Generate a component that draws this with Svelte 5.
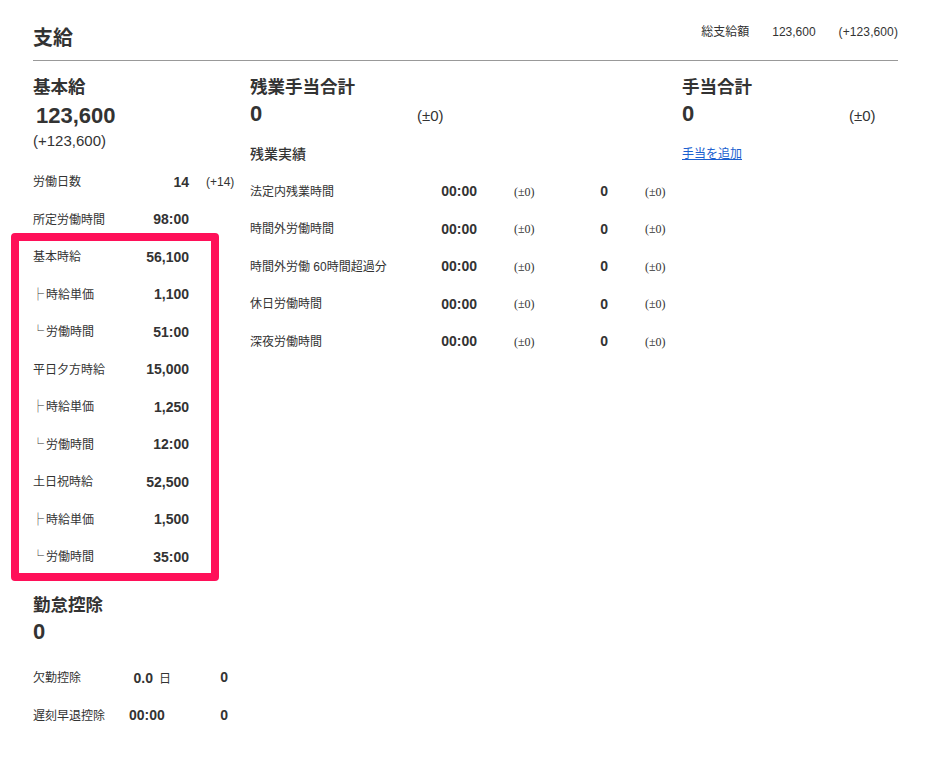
<script>
  const payRows = [
    { label: '労働日数', value: '14', diff: '(+14)' },
    { label: '所定労働時間', value: '98:00' }
  ];

  const hourlyRows = [
    { label: '基本時給', value: '56,100' },
    { mark: '├', label: '時給単価', value: '1,100' },
    { mark: '└', label: '労働時間', value: '51:00' },
    { label: '平日夕方時給', value: '15,000' },
    { mark: '├', label: '時給単価', value: '1,250' },
    { mark: '└', label: '労働時間', value: '12:00' },
    { label: '土日祝時給', value: '52,500' },
    { mark: '├', label: '時給単価', value: '1,500' },
    { mark: '└', label: '労働時間', value: '35:00' }
  ];

  const overtimeRows = [
    '法定内残業時間',
    '時間外労働時間',
    '時間外労働 60時間超過分',
    '休日労働時間',
    '深夜労働時間'
  ];
</script>

<div class="page">
  <header class="header">
    <h1>支給</h1>
    <div class="total">
      <span>総支給額</span>
      <span>123,600</span>
      <span class="total-diff">(+123,600)</span>
    </div>
  </header>

  <div class="columns">
    <section>
      <h2>基本給</h2>
      <p class="amount indent">123,600</p>
      <p class="amount-diff">(+123,600)</p>

      <div class="rows">
        {#each payRows as row}
          <div class="pay-row">
            <span class="label">{row.label}</span>
            <span class="value">{row.value}</span>
            {#if row.diff}<span class="diff">{row.diff}</span>{/if}
          </div>
        {/each}
        <div class="highlight">
          {#each hourlyRows as row}
            <div class="pay-row">
              <span class="label">{#if row.mark}<span class="mark">{row.mark}</span>{/if}{row.label}</span>
              <span class="value">{row.value}</span>
            </div>
          {/each}
        </div>
      </div>

      <h2 class="deduct-title">勤怠控除</h2>
      <p class="amount">0</p>
      <div class="deduct-rows">
        <div class="deduct-row">
          <span class="label">欠勤控除</span>
          <span class="deduct-days"><b>0.0</b><span class="unit">日</span></span>
          <span class="value">0</span>
        </div>
        <div class="deduct-row">
          <span class="label">遅刻早退控除</span>
          <span class="value left">00:00</span>
          <span class="value">0</span>
        </div>
      </div>
    </section>

    <section>
      <h2>残業手当合計</h2>
      <div class="sum">
        <span class="amount">0</span>
        <span class="sum-diff">(±0)</span>
      </div>
      <h3>残業実績</h3>
      {#each overtimeRows as label}
        <div class="overtime-row">
          <span class="label">{label}</span>
          <span class="value">00:00</span>
          <span class="diff serif">(±0)</span>
          <span class="value">0</span>
          <span class="diff serif">(±0)</span>
        </div>
      {/each}
    </section>

    <section>
      <h2>手当合計</h2>
      <div class="sum">
        <span class="amount">0</span>
        <span class="sum-diff">(±0)</span>
      </div>
      <a class="add-link" href="#add">手当を追加</a>
    </section>
  </div>
</div>

<style>
  :global(body) {
    background: #fff;
    color: #333;
    font-family: "Liberation Sans", "Noto Sans CJK JP", sans-serif;
  }

  .page {
    height: 768px;
    padding: 0 30px 0 33px;
    box-sizing: border-box;
    overflow: hidden;
  }

  .header {
    height: 60px;
    display: flex;
    justify-content: space-between;
    border-bottom: 1px solid #999;
  }

  h1 {
    margin: 25px 0 0;
    font-size: 20px;
    line-height: 26px;
    font-weight: 700;
  }

  .total {
    display: flex;
    gap: 23px;
    margin-top: 23px;
    font-size: 12px;
    line-height: 18px;
  }

  .total-diff {
    letter-spacing: 0.1px;
  }

  .columns {
    display: grid;
    grid-template-columns: 217px 432px 1fr;
    padding-top: 14px;
  }

  h2 {
    margin: 0;
    font-size: 17.5px;
    line-height: 24px;
    font-weight: 700;
  }

  h3 {
    margin: 14px 0 7.25px;
    font-size: 14px;
    line-height: 22px;
    font-weight: 500;
  }

  p {
    margin: 0;
  }

  .amount {
    font-size: 22px;
    line-height: 30px;
    font-weight: 700;
  }

  .indent {
    margin-top: 2px;
    padding-left: 3px;
  }

  .amount-diff {
    font-size: 15px;
    line-height: 20px;
  }

  .rows {
    margin-top: 11.75px;
  }

  .pay-row {
    height: 37.5px;
    display: flex;
    align-items: center;
  }

  .label {
    font-size: 12px;
    white-space: nowrap;
    margin-bottom: 2px;
  }

  .mark {
    display: inline-block;
    width: 14px;
    margin-left: -1px;
    font-family: "Noto Sans CJK JP", sans-serif;
    font-weight: 700;
  }

  .value {
    font-size: 14px;
    font-weight: 700;
    text-align: right;
  }

  .pay-row .label {
    width: 110px;
  }

  .pay-row .value {
    width: 46px;
  }

  .diff {
    font-size: 12px;
  }

  .pay-row .diff {
    margin-left: 17px;
    white-space: nowrap;
  }

  .serif {
    font-family: "Liberation Serif", serif;
  }

  .highlight {
    position: relative;
  }

  .highlight::after {
    content: "";
    position: absolute;
    top: -4.75px;
    left: -22px;
    width: 208px;
    bottom: -5.5px;
    box-sizing: border-box;
    border: 8px solid #ff1059;
    border-radius: 4px;
    pointer-events: none;
  }

  .deduct-title {
    margin-top: 18px;
  }

  .deduct-rows {
    margin-top: 11px;
  }

  .deduct-row {
    height: 38px;
    display: grid;
    grid-template-columns: 96px 46px 53px;
    align-items: center;
  }

  .deduct-days {
    font-size: 14px;
    text-align: right;
    padding-right: 4px;
    white-space: nowrap;
  }

  .unit {
    font-size: 12px;
    margin-left: 6px;
  }

  .left {
    text-align: left;
  }

  .sum {
    display: grid;
    grid-template-columns: 167px auto;
    align-items: baseline;
    line-height: 30px;
    height: 30px;
  }

  .sum-diff {
    font-size: 15px;
  }

  .overtime-row {
    height: 37.5px;
    display: grid;
    grid-template-columns: 155px 72px auto 72px auto;
    justify-content: start;
    align-items: center;
  }

  .overtime-row .diff {
    margin-left: 37px;
    margin-top: 2px;
    width: 22px;
  }

  .add-link {
    display: block;
    margin-top: 14px;
    font-size: 12px;
    line-height: 22px;
    color: #1a5fd0;
  }
</style>
